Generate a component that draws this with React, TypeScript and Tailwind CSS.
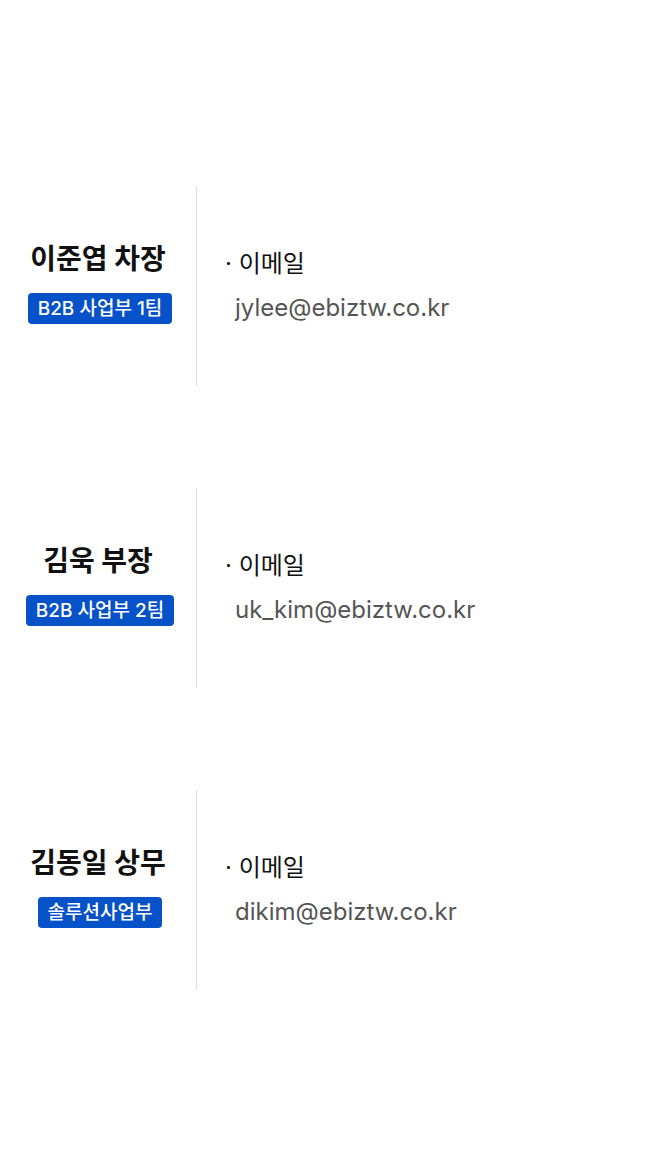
const people = [
  { name: '이준엽 차장', team: 'B2B 사업부 1팀', email: 'jylee@ebiztw.co.kr' },
  { name: '김욱 부장', team: 'B2B 사업부 2팀', email: 'uk_kim@ebiztw.co.kr' },
  { name: '김동일 상무', team: '솔루션사업부', email: 'dikim@ebiztw.co.kr' },
];

export default function App() {
  return (
    <div
      className="min-h-[1176px] w-[660px] bg-white pt-[186px]"
      style={{ fontFamily: 'Inter, "Noto Sans CJK KR", sans-serif' }}
    >
      <div className="flex flex-col gap-[102px]">
        {people.map((p) => (
          <div key={p.email} className="flex h-[200px] items-stretch">
            <div className="flex w-[196px] flex-col items-center justify-center pb-[7px]">
              <p className="text-[28px] font-bold leading-[36px] text-[#111]">
                {p.name}
              </p>
              <span className="ml-[4px] mt-[16px] rounded-[4px] bg-[#0752c9] px-[10px] text-[19px] font-medium leading-[31px] text-white">
                {p.team}
              </span>
            </div>
            <div className="w-px bg-[#dddddd]" />
            <div className="flex flex-col justify-center pl-[28px]">
              <p className="text-[24px] leading-[32px] text-[#111]">· 이메일</p>
              <p className="mt-[12px] pl-[10px] text-[24px] leading-[32px] text-[#555]">
                {p.email}
              </p>
            </div>
          </div>
        ))}
      </div>
    </div>
  );
}
